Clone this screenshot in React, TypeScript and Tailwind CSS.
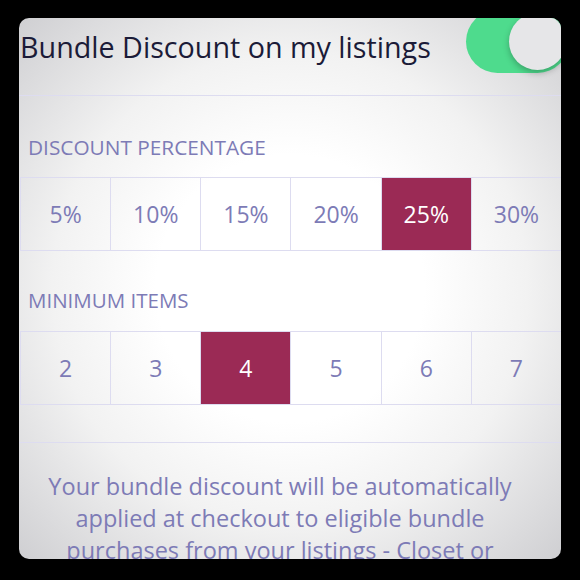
import React, { useState } from "react";

const percents = ["5%", "10%", "15%", "20%", "25%", "30%"];
const items = ["2", "3", "4", "5", "6", "7"];

type RowProps = {
  values: string[];
  selected: string;
  onPick: (v: string) => void;
};

const OptionRow: React.FC<RowProps> = ({ values, selected, onPick }) => (
  <div className="ml-px shrink-0 grid grid-cols-6 h-[74px] border-y border-[#dddcf0]">
    {values.map((v) => (
      <button
        key={v}
        onClick={() => onPick(v)}
        className={`flex items-center justify-center border-l border-[#dddcf0] text-[23px] ${
          selected === v ? "bg-[#9b2a55] text-white" : "text-[#7d7bb6]"
        }`}
      >
        {v}
      </button>
    ))}
  </div>
);

export default function App() {
  const [enabled, setEnabled] = useState(true);
  const [percent, setPercent] = useState("25%");
  const [minItems, setMinItems] = useState("4");

  return (
    <div className="w-[580px] h-[580px] bg-black pt-[18px] pl-[19px] pr-[19px] pb-[21px] font-['Open_Sans',sans-serif]">
      <div className="h-full overflow-hidden rounded-[10px] bg-[radial-gradient(ellipse_at_center,#ffffff_35%,#f2f2f2_62%,#cfcfd2_100%)] flex flex-col">
        {/* header */}
        <div className="h-[78px] shrink-0 flex justify-between border-b border-[#dddcf0]">
          <h1 className="pt-[11px] pl-[1px] text-[28.7px] leading-[36px] text-[#1b1b38] whitespace-nowrap">
            Bundle Discount on my listings
          </h1>
          <button
            onClick={() => setEnabled(!enabled)}
            className={`-mt-[8px] -mr-[8px] w-[103px] h-[63px] shrink-0 rounded-full p-[3px] flex ${
              enabled
                ? "bg-[#4edb8d] justify-end"
                : "bg-[#e3e3e3] justify-start"
            }`}
          >
            <span className="w-[57px] h-[57px] rounded-full bg-[#e6e6e8] shadow-[0_3px_6px_rgba(0,0,0,0.25)]" />
          </button>
        </div>

        {/* discount percentage */}
        <div className="shrink-0 pt-[38px] pl-[9px] pb-[17px] text-[20.8px] leading-[26px] text-[#7d7bb6]">
          DISCOUNT PERCENTAGE
        </div>
        <OptionRow values={percents} selected={percent} onPick={setPercent} />

        {/* minimum items */}
        <div className="shrink-0 pt-[36px] pl-[9px] pb-[18px] text-[20.5px] leading-[26px] text-[#7d7bb6]">
          MINIMUM ITEMS
        </div>
        <OptionRow values={items} selected={minItems} onPick={setMinItems} />

        <div className="shrink-0 mt-[37px] border-t border-[#dddcf0]" />

        <p className="shrink-0 pt-[27px] pl-[14px] pr-[34px] text-center text-[23.5px] leading-[32px] text-[#7d7bb6]">
          Your bundle discount will be automatically applied at checkout to
          eligible bundle purchases from your listings - Closet or Boutique.
        </p>
      </div>
    </div>
  );
}
